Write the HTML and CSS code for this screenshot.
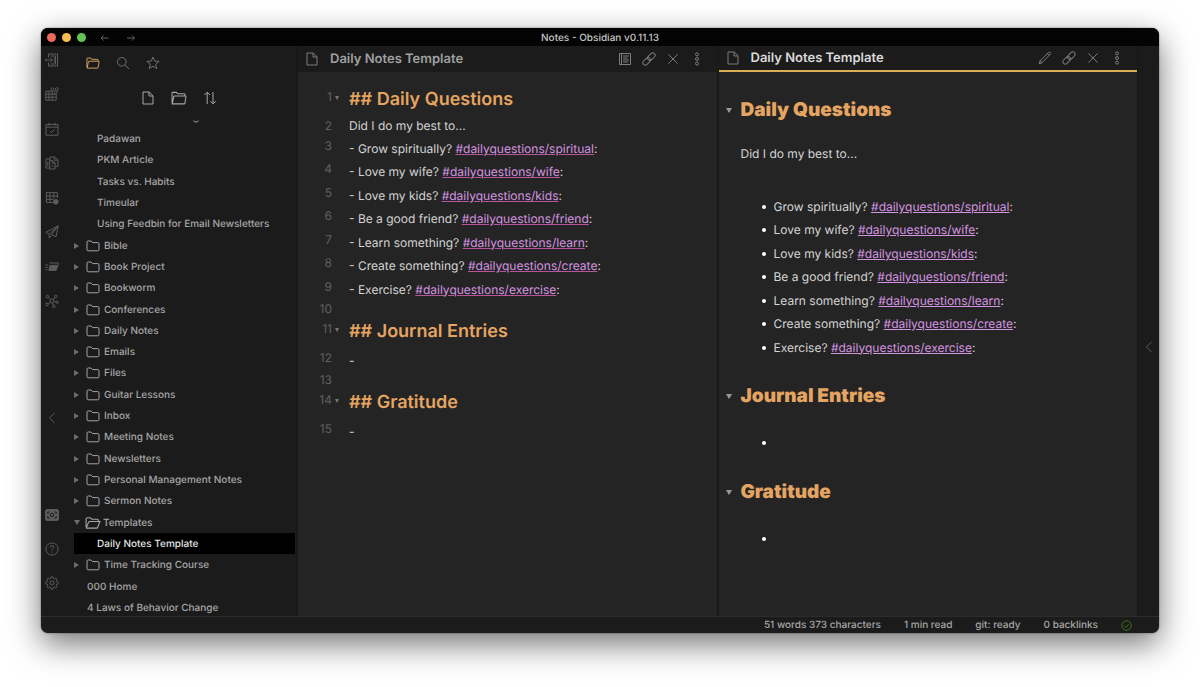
FILE: index.html
```html
<!DOCTYPE html>
<html lang="en">
<head>
<meta charset="utf-8">
<title>Notes - Obsidian v0.11.13</title>
<link rel="stylesheet" href="styles.css">
</head>
<body>
<svg class="defs" aria-hidden="true">
  <symbol id="folder" viewBox="0 0 14 12"><path d="M1 9.6V2.2Q1 1 2.2 1H5l1.6 1.6h5.2Q13 2.6 13 3.8v5.8q0 1.2-1.2 1.2H2.2Q1 10.8 1 9.6z"/></symbol>
  <symbol id="folder-open" viewBox="0 0 15 12"><path d="M1 10V2.2Q1 1 2.2 1H5l1.4 1.4h5q1.2 0 1.2 1.4v.8M1.2 10.4 3.4 5.2q.3-.6 1-.6H14l-2.2 5.6q-.2.6-1 .6H1.8q-.8 0-.6-.4z"/></symbol>
  <symbol id="folder-tab" viewBox="0 0 15 13"><path d="M1 11.400V1.800Q1 1.200 1.600 1.200h3.600l1 1.400h6.200q.6 0 .6.600v1.400M1.200 12 2.600 5q.1-.4.600-.4h10.400q.5 0 .4.500L13 11.500q-.1.500-.6.500z"/></symbol>
  <symbol id="file" viewBox="0 0 12 14"><path d="M1 1h6.200L11 4.800V13H1zM7 1v4h4"/></symbol>
  <symbol id="link" viewBox="0 0 14 14"><g transform="rotate(-45 7 7)"><rect x="-.6" y="4.600" width="8.600" height="4.800" rx="2.400"/><rect x="6" y="4.600" width="8.600" height="4.800" rx="2.400"/></g></symbol>
  <symbol id="cross" viewBox="0 0 14 14"><path d="m2.400 2.400 9.200 9.200m0-9.200-9.200 9.200"/></symbol>
  <symbol id="dots" viewBox="0 0 14 14"><circle cx="7" cy="2.400" r="1.500"/><circle cx="7" cy="7" r="1.500"/><circle cx="7" cy="11.600" r="1.500"/></symbol>
  <symbol id="chevron" viewBox="0 0 14 14"><path d="M9.600 2 4.400 7l5.200 5"/></symbol>
</svg>
<main class="window">
  <header class="titlebar">
    <div class="lights"><span class="light red"></span><span class="light yellow"></span><span class="light green"></span></div>
    <button class="nav" aria-label="Back"><svg class="icon small" viewBox="0 0 10 10"><path d="M8.500 5H1m2.500-2.500L1 5l2.500 2.500"/></svg></button>
    <button class="nav" aria-label="Forward"><svg class="icon small" viewBox="0 0 10 10"><path d="M1 5h7.500M6 2.500 8.500 5 6 7.500"/></svg></button>
    <h1 class="title">Notes - Obsidian v0.11.13</h1>
  </header>
  <div class="workspace">
    <nav class="ribbon" aria-label="Ribbon">
      <div class="plugins">
        <button aria-label="Open quick switcher"><svg class="icon" viewBox="0 0 14 14"><path d="M3.500 4.600V1h9v12h-9V9.600M5.500 3h5v8h-5M1 7h6.400M5.200 4.800 7.600 7 5.200 9.200M8.600 5h2M8.600 7h2M8.600 9h2M1 5.600v2.800"/></svg></button>
        <button aria-label="Blocks"><svg class="icon" viewBox="0 0 14 14"><path d="M.8 4.200h6.400v9H.8zM.8 7.200h10.400v6H7.200M.8 10.200h10.400M4 4.200v9"/><circle cx="7.400" cy="2.400" r="1.500"/><circle cx="11.800" cy="2.200" r="1.500"/><circle cx="10.600" cy="5.400" r="1.500"/></svg></button>
        <button aria-label="Open today's note"><svg class="icon" viewBox="0 0 14 14"><path d="M1 2.400h12v10.800H1zM1 5.200h12M4 .8v3M10 .8v3M5 9l1.600 1.600L9.400 7.400"/></svg></button>
        <button aria-label="Copy files"><svg class="icon" viewBox="0 0 14 14"><path d="M5 3H1v9h3.600M5 4.200V1h4.600L13 4v6.400H9.800M9.400 1v3.200H13M4.600 4.600h3l2.400 2.200V13H4.600zM7.200 4.800v2.400H10M2.800 6v4M6.400 10h2"/></svg></button>
        <button aria-label="Table"><svg class="icon" viewBox="0 0 14 14"><path d="M8 11.600H1.400V1.600h11V7M1.400 5h11M1.400 8.400h7M5 1.600v10M8.800 1.600v6"/><circle class="solid" cx="10.800" cy="10.800" r="2.400"/></svg></button>
        <button aria-label="Publish"><svg class="icon" viewBox="0 0 14 14"><path d="M13.200.8.8 7.400l3.400 1.800zM13.200.8 11 11.800 6.400 9.600zM4.200 9.200v4L6.400 10.400"/></svg></button>
        <button aria-label="Slides"><svg class="icon" viewBox="0 0 14 14"><path class="solid" d="M5 5.400h7.400l-1.200 5H3.800z"/><path d="M4.400 3h9l-1 5M.4 5h3M.4 7.400h2.400M.4 9.800h2"/></svg></button>
        <button aria-label="Open graph view"><svg class="icon" viewBox="0 0 14 14"><circle cx="7" cy="7" r="2"/><circle cx="2.400" cy="2.600" r="1.300"/><circle cx="10.800" cy="2.400" r="1.300"/><circle cx="12.200" cy="8.200" r="1.200"/><circle cx="2" cy="10.400" r="1.300"/><circle cx="8.800" cy="12.400" r="1.300"/><path d="m3.400 3.600 2.200 2M9.800 3.400 8.400 5.600M11 8 9 7.400M3.200 9.800l2.200-1.600M8.400 11.200 7.600 9"/></svg></button>
      </div>
      <button class="collapse" aria-label="Collapse left sidebar"><svg class="icon"><use href="#chevron"/></svg></button>
      <button aria-label="Open vault"><svg class="icon" viewBox="0 0 14 14"><rect class="solid" x=".6" y="1.600" width="12.800" height="10.800" rx="1"/><path class="cut" d="M4.400 4H2.800v1.800M9.600 4h1.600v1.800M4.400 10H2.800V8.200M9.600 10h1.600V8.200"/><circle class="cut ring" cx="7" cy="7" r="1.800"/></svg></button>
      <button aria-label="Help"><svg class="icon" viewBox="0 0 14 14"><circle cx="7" cy="7" r="6.100"/><path d="M5.200 5.600q0-1.900 1.800-1.900t1.800 1.700q0 .9-.9 1.400T7 8.400M7 9.600v1.100"/></svg></button>
      <button aria-label="Settings"><svg class="icon" viewBox="0 0 14 14"><circle cx="7" cy="7" r="2"/><path d="m6 .9h2l.3 1.600 1.100.5 1.400-1 1.300 1.300-.9 1.400.5 1.100 1.500.3v1.800l-1.500.3-.5 1.100.9 1.400-1.300 1.300-1.400-.9-1.100.5L8 13.100H6l-.3-1.500-1.100-.5-1.400.9-1.300-1.300.9-1.400-.5-1.100L.8 7.900V6.100l1.500-.3.5-1.100-.9-1.400L3.200 2l1.400 1 1.100-.5z"/></svg></button>
    </nav>
    <aside class="sidebar">
      <div class="tabs">
        <button class="active" aria-label="File explorer"><svg class="icon"><use href="#folder-tab"/></svg></button>
        <button aria-label="Search"><svg class="icon" viewBox="0 0 14 14"><circle cx="5.800" cy="5.800" r="4.300"/><path d="m9 9 4 4"/></svg></button>
        <button aria-label="Starred"><svg class="icon" viewBox="0 0 14 14"><path d="m7 1 1.700 4.100 4.500.3-3.500 2.800 1.100 4.400L7 10.200l-3.800 2.400 1.100-4.400L.8 5.400l4.500-.3z"/></svg></button>
      </div>
      <div class="actions">
        <button aria-label="New note"><svg class="icon"><use href="#file"/></svg></button>
        <button aria-label="New folder"><svg class="icon wide"><use href="#folder-tab"/></svg></button>
        <button aria-label="Change sort order"><svg class="icon" viewBox="0 0 14 14"><path d="M4.200 13V1.200M1.400 4l2.800-2.800L7 4M10 1v11.800M7.400 10.200l2.600 2.600 2.800-2.600"/></svg></button>
      </div>
      <svg class="scroll-edge" viewBox="0 0 6 3" aria-hidden="true"><path d="M.6.600q.4 1.400 2.400 1.400T5.400.4"/></svg>
      <ul class="tree">
        <li class="row note">Padawan</li>
        <li class="row note">PKM Article</li>
        <li class="row note">Tasks vs. Habits</li>
        <li class="row note">Timeular</li>
        <li class="row note">Using Feedbin for Email Newsletters</li>
        <li class="row dir"><svg class="icon"><use href="#folder"/></svg>Bible</li>
        <li class="row dir"><svg class="icon"><use href="#folder"/></svg>Book Project</li>
        <li class="row dir"><svg class="icon"><use href="#folder"/></svg>Bookworm</li>
        <li class="row dir"><svg class="icon"><use href="#folder"/></svg>Conferences</li>
        <li class="row dir"><svg class="icon"><use href="#folder"/></svg>Daily Notes</li>
        <li class="row dir"><svg class="icon"><use href="#folder"/></svg>Emails</li>
        <li class="row dir"><svg class="icon"><use href="#folder"/></svg>Files</li>
        <li class="row dir"><svg class="icon"><use href="#folder"/></svg>Guitar Lessons</li>
        <li class="row dir"><svg class="icon"><use href="#folder"/></svg>Inbox</li>
        <li class="row dir"><svg class="icon"><use href="#folder"/></svg>Meeting Notes</li>
        <li class="row dir"><svg class="icon"><use href="#folder"/></svg>Newsletters</li>
        <li class="row dir"><svg class="icon"><use href="#folder"/></svg>Personal Management Notes</li>
        <li class="row dir"><svg class="icon"><use href="#folder"/></svg>Sermon Notes</li>
        <li class="row dir open"><svg class="icon wide"><use href="#folder-open"/></svg>Templates</li>
        <li class="row note current">Daily Notes Template</li>
        <li class="row dir"><svg class="icon"><use href="#folder"/></svg>Time Tracking Course</li>
        <li class="row root">000 Home</li>
        <li class="row root">4 Laws of Behavior Change</li>
      </ul>
    </aside>
    <section class="pane editor">
      <header class="pane-head">
        <svg class="icon"><use href="#file"/></svg>
        <h2 class="pane-title">Daily Notes Template</h2>
        <button aria-label="Preview"><svg class="icon" viewBox="0 0 14 14"><path d="M1.500 1.500h11v11h-11zM3.500 1.500v11M5 4h6M5 6h4.400M5 8h6M5 10h5"/></svg></button>
        <button aria-label="Link pane"><svg class="icon"><use href="#link"/></svg></button>
        <button aria-label="Close"><svg class="icon"><use href="#cross"/></svg></button>
        <button aria-label="More options"><svg class="icon"><use href="#dots"/></svg></button>
      </header>
      <div class="source">
        <div class="line head"><span class="num fold">1</span><span>## Daily Questions</span></div>
        <div class="line intro"><span class="num">2</span><span>Did I do my best to...</span></div>
        <div class="block">
          <div class="line"><span class="num">3</span><span>- Grow spiritually? <a href="#spiritual">#dailyquestions/spiritual</a>:</span></div>
          <div class="line"><span class="num">4</span><span>- Love my wife? <a href="#wife">#dailyquestions/wife</a>:</span></div>
          <div class="line"><span class="num">5</span><span>- Love my kids? <a href="#kids">#dailyquestions/kids</a>:</span></div>
          <div class="line"><span class="num">6</span><span>- Be a good friend? <a href="#friend">#dailyquestions/friend</a>:</span></div>
          <div class="line"><span class="num">7</span><span>- Learn something? <a href="#learn">#dailyquestions/learn</a>:</span></div>
          <div class="line"><span class="num">8</span><span>- Create something? <a href="#create">#dailyquestions/create</a>:</span></div>
          <div class="line"><span class="num">9</span><span>- Exercise? <a href="#exercise">#dailyquestions/exercise</a>:</span></div>
        </div>
        <div class="line blank"><span class="num">10</span></div>
        <div class="line head"><span class="num fold">11</span><span>## Journal Entries</span></div>
        <div class="line"><span class="num">12</span><span>-</span></div>
        <div class="line blank"><span class="num">13</span></div>
        <div class="line head"><span class="num fold">14</span><span>## Gratitude</span></div>
        <div class="line"><span class="num">15</span><span>-</span></div>
      </div>
    </section>
    <section class="pane preview">
      <header class="pane-head">
        <svg class="icon"><use href="#file"/></svg>
        <h2 class="pane-title">Daily Notes Template</h2>
        <button aria-label="Edit"><svg class="icon" viewBox="0 0 14 14"><path d="M1.200 12.800 2 9.800 10.400 1.600q.9-.8 1.700 0t0 1.700L3.800 12zM9.400 2.600l1.800 1.800M2 9.800 3.800 12"/></svg></button>
        <button aria-label="Link pane"><svg class="icon"><use href="#link"/></svg></button>
        <button aria-label="Close"><svg class="icon"><use href="#cross"/></svg></button>
        <button aria-label="More options"><svg class="icon"><use href="#dots"/></svg></button>
      </header>
      <article class="rendered">
        <h2>Daily Questions</h2>
        <p>Did I do my best to...</p>
        <ul class="questions">
          <li>Grow spiritually? <a href="#spiritual">#dailyquestions/spiritual</a>:</li>
          <li>Love my wife? <a href="#wife">#dailyquestions/wife</a>:</li>
          <li>Love my kids? <a href="#kids">#dailyquestions/kids</a>:</li>
          <li>Be a good friend? <a href="#friend">#dailyquestions/friend</a>:</li>
          <li>Learn something? <a href="#learn">#dailyquestions/learn</a>:</li>
          <li>Create something? <a href="#create">#dailyquestions/create</a>:</li>
          <li>Exercise? <a href="#exercise">#dailyquestions/exercise</a>:</li>
        </ul>
        <h2>Journal Entries</h2>
        <ul class="empty"><li></li></ul>
        <h2>Gratitude</h2>
        <ul class="empty"><li></li></ul>
      </article>
    </section>
    <div class="ribbon right"><button aria-label="Expand right sidebar"><svg class="icon"><use href="#chevron"/></svg></button></div>
  </div>
  <footer class="status">
    <span>51 words 373 characters</span><span>1 min read</span><span>git: ready</span><span>0 backlinks</span>
    <svg class="icon sync" viewBox="0 0 14 14"><circle cx="7" cy="7" r="6"/><path d="m4 7.200 2.200 2.200L10 5.400"/></svg>
  </footer>
</main>
</body>
</html>
```
FILE: styles.css
```css
* { box-sizing: border-box; }
body {
  margin: 0;
  min-height: 100vh;
  padding: 28px 41px 54px;
  display: flex;
  background: #fff;
  color: #d4d4d4;
  font: 12px/18px Inter, "Liberation Sans", sans-serif;
  text-rendering: geometricPrecision;
}
h1, h2, p, ul { margin: 0; padding: 0; }
ul { list-style: none; }
button { display: flex; padding: 0; border: 0; background: none; color: inherit; }
.defs { position: absolute; width: 0; height: 0; }
.icon { width: 14px; height: 14px; flex: none; fill: none; stroke: currentColor; stroke-width: 1; }
.icon.small { width: 10px; height: 10px; }
.icon.wide { width: 16px; }
.solid { fill: currentColor; }
.cut { stroke: #1b1b1b; }
.ring { fill: none; }

.window {
  flex: 1;
  min-width: 0;
  display: flex;
  flex-direction: column;
  overflow: hidden;
  border-radius: 7px;
  background: #1b1b1b;
  box-shadow: 0 0 2px rgba(0, 0, 0, .5), 0 11px 32px rgba(0, 0, 0, .55);
}
.titlebar {
  position: relative;
  display: flex;
  align-items: center;
  height: 18px;
  padding: 1px 6px 0;
  background: #040404;
}
.lights { display: flex; gap: 6px; margin-right: 14px; }
.light { width: 9px; height: 9px; border-radius: 50%; }
.red { background: #ed6a5e; }
.yellow { background: #f5bf4f; }
.green { background: #61c554; }
.nav { margin-right: 16px; color: #606060; }
.title {
  position: absolute;
  inset: 0;
  font-size: 10px;
  line-height: 20px;
  font-weight: 500;
  text-align: center;
  color: #c4c4c4;
  pointer-events: none;
}

.workspace { flex: 1; display: flex; min-height: 0; }
.ribbon {
  width: 22px;
  display: flex;
  flex-direction: column;
  align-items: center;
  gap: 20px;
  padding: 7px 0 26px;
  color: #5c5c5c;
}
.plugins { display: flex; flex-direction: column; justify-content: space-between; height: 255px; }
.collapse { margin: auto 0 63px; }
.right { justify-content: center; padding: 32px 0 0; border-left: 1px solid #161616; }

.sidebar { width: 233px; display: flex; flex-direction: column; padding-left: 11px; color: #a6a6a6; }
.tabs { display: flex; gap: 16px; padding: 10px 0 0 12px; color: #707070; }
.active { color: #d9a860; }
.actions { display: flex; justify-content: center; gap: 16px; padding: 21px 12px 0 0; }
.scroll-edge { width: 6px; height: 3px; margin: 15px 0 5px 119px; fill: none; stroke: currentColor; }
.tree {
  flex: 1;
  display: grid;
  grid-auto-rows: 1fr;
  margin-bottom: -2px;
  font-size: 10px;
  font-weight: 500;
}
.row { display: flex; align-items: center; margin-right: 1px; padding-top: 1px; line-height: 14px; white-space: nowrap; }
.note { padding-left: 23px; }
.root { padding-left: 13px; }
.dir { gap: 4px; }
.dir::before {
  content: "";
  width: 0;
  margin-right: 3px;
  border: 3px solid transparent;
  border-left: 5px solid #6c6c6c;
  border-right: 0;
}
.open { gap: 2px; }
.open::before {
  border: 3px solid transparent;
  border-top: 5px solid #6c6c6c;
  border-bottom: 0;
}
.current { background: #000; border-radius: 1px; color: #e4e4e4; }

.pane { flex: 1; min-width: 0; border-left: 2px solid #191919; background: #242424; }
.pane-head {
  display: flex;
  align-items: center;
  gap: 11px;
  height: 26px;
  padding: 0 13px 0 7px;
  background: #1b1b1b;
  color: #7c7c7c;
}
.pane-head button + button { margin-left: -1px; }
.pane-title { flex: 1; font-size: 13px; line-height: 20px; font-weight: 600; color: #a0a0a0; }
.preview .pane-head { border-bottom: 2px solid #dcae55; }
.preview .pane-title { color: #dadada; }

.source { padding-top: 13px; }
.line { display: flex; min-height: 23px; line-height: 23px; }
.block { display: grid; grid-auto-rows: 1fr; height: 164px; }
.num {
  position: relative;
  width: 34px;
  margin-right: 17px;
  line-height: 17px;
  text-align: right;
  color: #606060;
}
.intro .num { line-height: 23px; }
.blank { min-height: 16px; line-height: 16px; }
.blank .num { line-height: 16px; }
.head {
  height: 29px;
  font-size: 18px;
  line-height: 30px;
  font-weight: 600;
  color: #e5a461;
}
.blank + .head { height: 32px; }
.head .num { font-size: 12px; line-height: 24px; font-weight: 400; }
.fold::after {
  content: "";
  position: absolute;
  top: 11px;
  right: -7px;
  border: 2px solid transparent;
  border-top: 4px solid #777;
  border-bottom: 0;
}
a { color: #d495e0; text-decoration: underline; text-decoration-color: #b9559b; }
.preview a { text-decoration-color: currentColor; }

.rendered { padding: 23px 22px 0; }
.rendered h2 {
  position: relative;
  margin-bottom: 18px;
  font-size: 19px;
  line-height: 29px;
  font-weight: 900;
  color: #e5a461;
}
.rendered h2::before {
  content: "";
  position: absolute;
  left: -15px;
  top: 13px;
  border: 3px solid transparent;
  border-top: 5px solid #999;
  border-bottom: 0;
}
.rendered p { margin-bottom: 30px; line-height: 23px; }
.rendered ul { padding-left: 33px; margin-bottom: 22px; }
.rendered li { position: relative; min-height: 24px; line-height: 23px; }
.questions { display: grid; grid-auto-rows: 1fr; height: 164px; }
.questions li { min-height: 0; }
.rendered .empty { padding-top: 3px; }
.rendered li::before {
  content: "";
  position: absolute;
  left: -12px;
  top: 10px;
  width: 4px;
  height: 4px;
  border-radius: 50%;
  background: #fff;
}

.status {
  display: flex;
  align-items: center;
  justify-content: flex-end;
  gap: 23px;
  height: 17px;
  padding: 1px 27px 0;
  border-top: 1px solid #2c2c2c;
  font-size: 10px;
  font-weight: 500;
  line-height: 15px;
  color: #a6a6a6;
}
.sync { width: 11px; height: 11px; color: #4c8a1c; }
```
